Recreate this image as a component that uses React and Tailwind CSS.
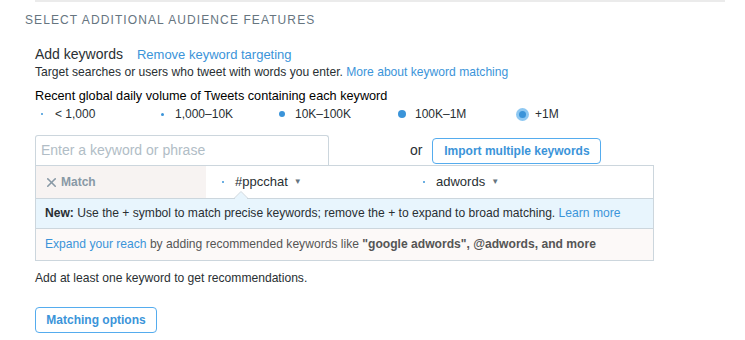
import { X } from "lucide-react";

const volumes = [
  { label: "< 1,000", dot: "w-[2px] h-[2px]" },
  { label: "1,000–10K", dot: "w-[3px] h-[3px]" },
  { label: "10K–100K", dot: "w-[6px] h-[6px]" },
  { label: "100K–1M", dot: "w-[8px] h-[8px]" },
];

function Dot({ size }) {
  return (
    <span className="w-[14px] flex items-center justify-center">
      <span className={`${size} rounded-full bg-[#3b94d9]`} />
    </span>
  );
}

function Keyword({ text }) {
  return (
    <div className="w-[201px] flex items-center pl-[16px]">
      <span className="w-[2px] h-[2px] rounded-full bg-[#3b94d9]" />
      <span className="ml-[11px] text-[13px] text-[#292f33]">{text}</span>
      <span className="ml-[6px] text-[8px] text-[#66757f]">▼</span>
    </div>
  );
}

function App() {
  return (
    <div
      className="w-[745px] h-[340px] bg-white relative overflow-hidden"
      style={{ fontFamily: '"Liberation Sans", Arial, sans-serif' }}
    >
      <div className="ml-[35px] w-[690px] h-[2px] bg-[#ebebeb]" />

      <div className="pl-[25px] pt-[11px] text-[12px] tracking-[1.1px] text-[#66757f] leading-[14px]">
        SELECT ADDITIONAL AUDIENCE FEATURES
      </div>

      <div className="pl-[35px] pt-[19px] text-[#292f33]">
        <div className="flex items-baseline text-[14px] leading-[16px]">
          <span>Add keywords</span>
          <span className="ml-[14px] text-[13px] text-[#3b94d9]">
            Remove keyword targeting
          </span>
        </div>

        <div className="mt-[1px] text-[12.1px] leading-[16px]">
          Target searches or users who tweet with words you enter.{" "}
          <span className="text-[#3b94d9]">More about keyword matching</span>
        </div>

        <div className="mt-[8px] text-[12.7px] leading-[16px] text-black">
          Recent global daily volume of Tweets containing each keyword
        </div>

        <div className="mt-[1px] flex items-center h-[18px] text-[12px]">
          {volumes.map((v) => (
            <div key={v.label} className="w-[120px] flex items-center">
              <Dot size={v.dot} />
              <span className="ml-[6px]">{v.label}</span>
            </div>
          ))}
          <div className="w-[120px] flex items-center">
            <span className="w-[14px] flex items-center justify-center">
              <span className="w-[13px] h-[13px] rounded-full bg-[#8ec8f2] flex items-center justify-center">
                <span className="w-[7px] h-[7px] rounded-full bg-[#3b94d9]" />
              </span>
            </span>
            <span className="ml-[6px]">+1M</span>
          </div>
        </div>

        <div className="mt-[12px] flex items-center">
          <div className="w-[294px] h-[30px] border border-b-0 border-[#ccd6dd] rounded-t-[3px] flex items-center pl-[5px] text-[14px] text-[#b1bdc6]">
            Enter a keyword or phrase
          </div>
          <span className="ml-[81px] text-[14px]">or</span>
          <div className="ml-[10px] mt-[2px] w-[169px] h-[26px] border border-[#55acee] rounded-[4px] flex items-center justify-center text-[12px] font-bold text-[#3b94d9]">
            Import multiple keywords
          </div>
        </div>

        <div className="w-[619px] border border-[#ccd6dd]">
          <div className="h-[32px] flex relative">
            <div className="w-[170px] bg-[#f7f3f2] flex items-center pl-[8px] text-[#8899a6]">
              <X size={15} strokeWidth={2.5} />
              <span className="ml-[2px] text-[12px] font-bold">Match</span>
            </div>
            <Keyword text="#ppcchat" />
            <Keyword text="adwords" />
            <svg
              className="absolute left-[198px] bottom-[-1px]"
              width="14"
              height="8"
              viewBox="0 0 14 8"
            >
              <path d="M0 8 L7 1 L14 8 Z" fill="#e8f5fd" />
              <path d="M0 7.5 L7 0.5 L14 7.5" fill="none" stroke="#ccd6dd" />
            </svg>
          </div>
          <div className="h-[30px] bg-[#e8f5fd] border-t border-[#ccd6dd] flex items-center pl-[9px] text-[12.1px] relative">
            <div className="absolute left-[199px] top-[-1px] w-[12px] h-[1px] bg-[#e8f5fd]" />
            <span className="font-bold">New:</span>
            <span>
              &nbsp;Use the + symbol to match precise keywords; remove the + to
              expand to broad matching.{" "}
              <span className="text-[#3b94d9]">Learn more</span>
            </span>
          </div>
          <div className="h-[32px] bg-[#fcf9f8] border-t border-[#ccd6dd] flex items-center pl-[9px] text-[12.1px] text-[#555]">
            <span className="text-[#3b94d9]">Expand your reach</span>
            <span>&nbsp;by adding recommended keywords like&nbsp;</span>
            <span className="font-bold">
              "google adwords", @adwords, and more
            </span>
          </div>
        </div>

        <div className="mt-[9px] text-[12.1px] leading-[16px]">
          Add at least one keyword to get recommendations.
        </div>

        <div className="mt-[21px] w-[122px] h-[26px] border border-[#55acee] rounded-[4px] flex items-center justify-center text-[12px] font-bold text-[#3b94d9]">
          Matching options
        </div>
      </div>
    </div>
  );
}

export default App;
